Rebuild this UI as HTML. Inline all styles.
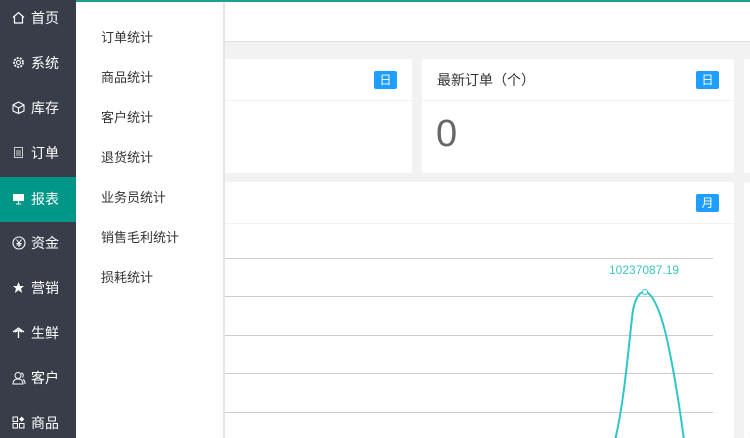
<!DOCTYPE html>
<html><head><meta charset="utf-8"><style>
*{margin:0;padding:0;box-sizing:border-box}
html,body{width:750px;height:438px;overflow:hidden}
body{background:#f2f2f2;font-family:"Liberation Sans","Noto Sans CJK SC",sans-serif;position:relative}
.top{position:absolute;left:76px;top:0;width:674px;height:42px;background:#fff;border-bottom:1px solid #ddd}
.tl{position:absolute;left:76px;top:0;width:674px;height:2px;background:#1e9e8b;z-index:5}
.side{position:absolute;left:0;top:0;width:76px;height:438px;background:#393d49}
.it{position:absolute;left:0;width:76px;height:45px;color:#fff;font-size:14px;line-height:45px;padding-left:31px}
.it svg{position:absolute;left:12px;top:15px}
.act{background:#009688}
.drop{position:absolute;left:76px;top:0;width:149px;height:438px;background:#fff;border-right:2px solid #e4e4e4}
.drop div{position:absolute;left:25px;font-size:13px;color:#333}
.card{position:absolute;background:#fff;border-radius:2px}
.hd{height:42px;border-bottom:1px solid #f2f2f2;position:relative;font-size:14px;color:#333;line-height:42px;padding-left:15px}
.bd{position:absolute;right:15px;top:12px;width:23px;height:18px;background:#1e9fff;color:#fff;font-size:12px;line-height:18px;text-align:center;border-radius:2px}
.gl{position:absolute;left:225px;width:488px;height:1px;background:#ccc}
</style></head><body>
<div class="top"></div>
<div class="card" style="left:100px;top:59px;width:312px;height:114px"><div class="hd"><span class="bd">日</span></div></div>
<div class="card" style="left:422px;top:59px;width:312px;height:114px"><div class="hd">最新订单（个）<span class="bd">日</span></div><div style="position:absolute;left:14px;top:54px;font-size:38px;color:#666">0</div></div>
<div class="card" style="left:744px;top:59px;width:6px;height:114px"></div>
<div class="card" style="left:100px;top:182px;width:634px;height:256px"><div class="hd"><span class="bd">月</span></div></div>
<div class="card" style="left:744px;top:182px;width:6px;height:256px"></div>
<div class="gl" style="top:258px"></div><div class="gl" style="top:296px"></div><div class="gl" style="top:335px"></div><div class="gl" style="top:373px"></div><div class="gl" style="top:412px"></div>
<div style="position:absolute;left:609px;top:263px;font-size:12px;color:#3cc4c4">10237087.19</div>
<svg style="position:absolute;left:0;top:0" width="750" height="438"><path d="M615 440 C625 400 630 330 633 310 C637 292 642 292 645 292 C652 292 660 310 666 335 C674 370 680 410 684 440" fill="none" stroke="#2ec7c9" stroke-width="2"/><circle cx="645" cy="292" r="2.5" fill="#fff" stroke="#2ec7c9"/></svg>
<div class="side">
<div class="it" style="top:-4px"><svg width="13" height="13" viewBox="0 0 13 13"><path d="M1 6.5L6.5 1.5L12 6.5M2.5 5.5V12H10.5V5.5" fill="none" stroke="#fff" stroke-width="1.2"/></svg>首页</div>
<div class="it" style="top:41px"><svg width="13" height="13" viewBox="0 0 13 13"><circle cx="6.5" cy="6.5" r="4.5" fill="none" stroke="#fff" stroke-width="1.8" stroke-dasharray="2 1.2"/><circle cx="6.5" cy="6.5" r="2" fill="none" stroke="#fff"/></svg>系统</div>
<div class="it" style="top:86px"><svg width="13" height="13" viewBox="0 0 13 13"><path d="M6.5 1L12 4V10L6.5 12.5L1 10V4ZM1 4L6.5 7L12 4M6.5 7V12.5" fill="none" stroke="#fff" stroke-width="1.1"/></svg>库存</div>
<div class="it" style="top:131px"><svg width="13" height="13" viewBox="0 0 13 13"><rect x="2.5" y="1.5" width="8" height="10" fill="none" stroke="#ccc"/><path d="M4 5H9M4 7H9M4 9H9" stroke="#ccc"/></svg>订单</div>
<div class="it act" style="top:177px"><svg width="13" height="13" viewBox="0 0 13 13"><rect x="1" y="2" width="11" height="7" fill="#fff"/><path d="M6.5 9V12M4 12H9" stroke="#fff"/></svg>报表</div>
<div class="it" style="top:221px"><svg width="14" height="14" viewBox="0 0 14 14"><circle cx="7" cy="7" r="6" fill="none" stroke="#fff" stroke-width="1.1"/><path d="M4.5 3.5L7 7L9.5 3.5M7 7V11M4.5 7.5H9.5M4.5 9H9.5" fill="none" stroke="#fff"/></svg>资金</div>
<div class="it" style="top:266px"><svg width="13" height="13" viewBox="0 0 13 13"><path d="M6.5 1L8 5H12L9 7.5L10.2 12L6.5 9.3L2.8 12L4 7.5L1 5H5Z" fill="#fff"/></svg>营销</div>
<div class="it" style="top:311px"><svg width="13" height="13" viewBox="0 0 13 13"><path d="M1 6L6.5 2L12 6M3 6L6.5 4L10 6M6.5 4V12" fill="none" stroke="#fff" stroke-width="1.3"/></svg>生鲜</div>
<div class="it" style="top:356px"><svg width="14" height="14" viewBox="0 0 14 14"><circle cx="6" cy="4.5" r="3" fill="none" stroke="#fff"/><path d="M1 13C1 9 3.5 8 6 8C8.5 8 11 9 11 13ZM9 2C11 2 12 4 10.5 6.5M11 8.5C12.5 9 13 11 13 13" fill="none" stroke="#fff"/></svg>客户</div>
<div class="it" style="top:401px"><svg width="13" height="13" viewBox="0 0 13 13"><rect x="1" y="1" width="4.5" height="4.5" fill="none" stroke="#fff"/><rect x="1" y="7.5" width="4.5" height="4.5" fill="none" stroke="#fff"/><rect x="7.5" y="7.5" width="4.5" height="4.5" fill="none" stroke="#fff"/><path d="M9.7 0.5L12.3 3.2L9.7 5.8L7.1 3.2Z" fill="#fff"/></svg>商品</div>
</div>
<div class="drop">
<div style="top:27px">订单统计</div>
<div style="top:67px">商品统计</div>
<div style="top:107px">客户统计</div>
<div style="top:147px">退货统计</div>
<div style="top:187px">业务员统计</div>
<div style="top:227px">销售毛利统计</div>
<div style="top:267px">损耗统计</div>
</div>
<div class="tl"></div>
</body></html>
